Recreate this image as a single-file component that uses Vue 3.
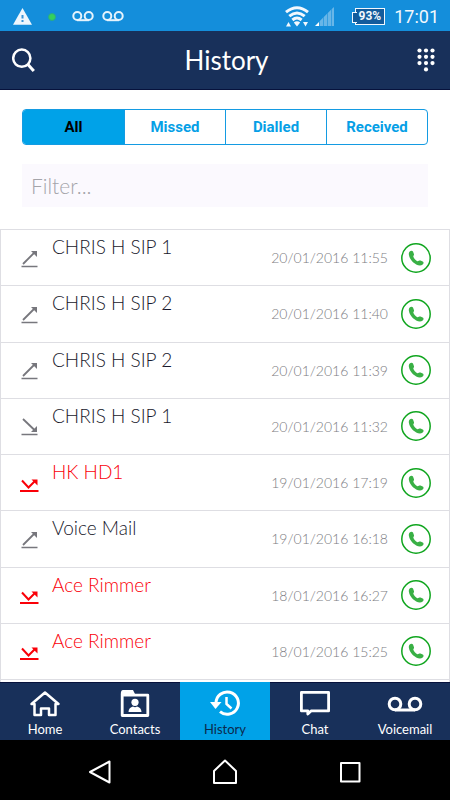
<script setup>
import { ref, computed } from 'vue'

const filters = ['All', 'Missed', 'Dialled', 'Received']
const active = ref('All')
const query = ref('')

const calls = [
  { name: 'CHRIS H SIP 1', time: '20/01/2016 11:55', type: 'Dialled' },
  { name: 'CHRIS H SIP 2', time: '20/01/2016 11:40', type: 'Dialled' },
  { name: 'CHRIS H SIP 2', time: '20/01/2016 11:39', type: 'Dialled' },
  { name: 'CHRIS H SIP 1', time: '20/01/2016 11:32', type: 'Received' },
  { name: 'HK HD1', time: '19/01/2016 17:19', type: 'Missed' },
  { name: 'Voice Mail', time: '19/01/2016 16:18', type: 'Dialled' },
  { name: 'Ace Rimmer', time: '18/01/2016 16:27', type: 'Missed' },
  { name: 'Ace Rimmer', time: '18/01/2016 15:25', type: 'Missed' },
]

const visible = computed(() =>
  calls.filter(
    (c) =>
      (active.value === 'All' || c.type === active.value) &&
      c.name.toLowerCase().includes(query.value.toLowerCase()),
  ),
)

const dots = [0, 1, 2].flatMap((r) => [0, 1, 2].map((c) => ({ x: 2.5 + c * 6.5, y: 2.5 + r * 6.3 })))
dots.push({ x: 9, y: 21.4 })
</script>

<template>
  <div class="app">
    <div class="status">
      <div class="status-side status-left">
        <svg width="20" height="18" viewBox="0 0 20 18">
          <path d="M10.500 0 20 16.700H1Z" fill="#eef6fd" />
          <path d="M10.500 7v3.500M10.500 12v2" stroke="#3a94d6" stroke-width="2" />
        </svg>
        <span class="dot"></span>
        <div class="tapes">
          <svg v-for="n in 2" :key="n" width="22" height="12" viewBox="0 0 22 12">
            <g fill="none" stroke="#e6f3fc" stroke-width="2">
              <circle cx="5.3" cy="5" r="4" /><circle cx="16.7" cy="5" r="4" /><path d="M5 9.2h12" />
            </g>
          </svg>
        </div>
      </div>
      <div class="status-side status-right">
        <svg width="26" height="22" viewBox="0 0 26 22">
          <g fill="none" stroke="#f2f8fd" stroke-width="3">
            <path d="M2 6.200Q13-2.800 24 6.200" />
            <path d="M5.300 10.200Q13 3.800 20.700 10.200" />
            <path d="M8.400 14Q13 10 17.600 14" />
          </g>
          <path d="M9.800 16.500Q13 14.100 16.200 16.500L13 20.500ZM2 20.500 4.500 16 7 20.500ZM19 16h5L21.500 20.500Z" fill="#f2f8fd" />
        </svg>
        <svg class="signal" width="20" height="20" viewBox="0 0 20 20">
          <path d="M0 19 4 15v4Z" fill="#fff" />
          <path d="M4.600 14.200 8 10.700V19H4.600ZM8.600 10.200 12 6.700V19H8.600ZM12.600 6.200 16 2.700V19h-3.400ZM16.600 2.200 19 0V19H16.600Z" fill="#68b6e8" />
        </svg>
        <span class="battery">93%</span>
        <span class="clock">17:01</span>
      </div>
    </div>

    <header class="header">
      <button class="icon-button" type="button" aria-label="Search">
        <svg width="24" height="24" viewBox="0 0 24 24" fill="none" stroke="#fff">
          <circle cx="9.800" cy="10.200" r="8.600" stroke-width="2.500" />
          <path d="m15.500 16 6.300 7" stroke-width="3" />
        </svg>
      </button>
      <h1>History</h1>
      <button class="icon-button" type="button" aria-label="Keypad">
        <svg width="18" height="24" viewBox="0 0 18 24">
          <circle v-for="(d, i) in dots" :key="i" :cx="d.x" :cy="d.y" r="2.100" fill="#fff" />
        </svg>
      </button>
    </header>

    <main class="content">
      <div class="tools">
        <div class="segments">
          <button
            v-for="f in filters"
            :key="f"
            type="button"
            :class="{ on: active === f }"
            :aria-pressed="active === f"
            @click="active = f"
          >{{ f }}</button>
        </div>
        <input v-model="query" class="filter" type="text" placeholder="Filter..." aria-label="Filter" />
      </div>

      <ul class="calls">
        <li v-for="(c, i) in visible" :key="i" :class="{ missed: c.type === 'Missed' }">
          <svg class="kind" width="20" height="20" viewBox="0 0 20 20" fill="none" stroke="currentColor">
            <g v-if="c.type === 'Dialled'">
              <path d="M4 16 15.500 4.500" stroke-width="1.800" />
              <path d="M12 3h6v6Z" fill="currentColor" stroke="none" />
              <path d="M2.500 18.500h16" stroke-width="1.500" />
            </g>
            <g v-else-if="c.type === 'Received'">
              <path d="M4 3 16 14.500" stroke-width="1.800" />
              <path d="M18 10v6h-6Z" fill="currentColor" stroke="none" />
              <path d="M2.500 18.500h16" stroke-width="1.500" />
            </g>
            <g v-else>
              <path d="m3 7.500 6.500 7 6.500-6.500" stroke-width="2" />
              <path d="M12.500 6.500h6v6Z" fill="currentColor" stroke="none" />
              <path d="M1 18h18.500" stroke-width="2" />
            </g>
          </svg>
          <span class="name">{{ c.name }}</span>
          <time>{{ c.time }}</time>
          <button class="call" type="button" :aria-label="'Call ' + c.name">
            <svg width="30" height="30" viewBox="0 0 30 30">
              <circle cx="15" cy="15" r="14.200" fill="none" stroke="#0fa51e" stroke-width="1.500" />
              <path d="M8.700 8.400C9.900 7.400 11.400 7.500 12 8.600L13 11.200C13.300 12.200 12.400 12.700 12.300 13.400C12.500 14.900 14.900 17.400 16.500 18.200C17.400 18.400 18.300 17.300 19.500 17.600L21.700 18.400C22.900 19 22.800 20.500 21.700 21.500C20 22.800 17.500 22.600 15.200 21.400C11.700 19.600 8.700 16 8 12.300C7.600 10.700 7.800 9.300 8.700 8.400Z" fill="#39b045" />
            </svg>
          </button>
        </li>
      </ul>
    </main>

    <nav class="tabs">
      <a href="#home">
        <svg width="32" height="28" viewBox="0 0 32 28" fill="none" stroke="#fff" stroke-width="2.500" stroke-linejoin="round">
          <path d="M2.500 14 16 2.500l13.500 11.500H26.500V25H20V18.500h-8V25H5.500V14Z" />
        </svg>
        <span>Home</span>
      </a>
      <a href="#contacts">
        <svg width="32" height="28" viewBox="0 0 32 28">
          <path d="M3.200 5.200H28.800v20.300H3.200Z" fill="none" stroke="#fff" stroke-width="2.800" stroke-linejoin="round" />
          <path d="M1.800 4Q1.800 0 4 0H14L16.500 5H1.800Z" fill="#fff" />
          <circle cx="16" cy="12.300" r="3.600" fill="#fff" />
          <path d="M9.500 22c0-3 2-5 4.500-5.500q2 1.500 4 0c2.500.500 4.500 2.500 4.500 5.500Z" fill="#fff" />
        </svg>
        <span>Contacts</span>
      </a>
      <a href="#history" class="current" aria-current="page">
        <svg width="32" height="28" viewBox="0 0 32 28" fill="none" stroke="#fff" stroke-width="3">
          <path d="M7 13A11.200 11.200 0 1 1 11 21.700" />
          <path d="M1 12h11.500L6.500 19Z" fill="#fff" stroke="none" />
          <path d="M17.500 7v7l5 4.500" stroke-width="2.500" />
        </svg>
        <span>History</span>
      </a>
      <a href="#chat">
        <svg width="32" height="28" viewBox="0 0 32 28" fill="none" stroke="#fff" stroke-width="2.800" stroke-linejoin="round">
          <path d="M2.400 2.400H29.600V20.900H12L8.800 24V20.900H2.400Z" />
        </svg>
        <span>Chat</span>
      </a>
      <a href="#voicemail">
        <svg width="36" height="28" viewBox="0 0 36 28" fill="none" stroke="#fff" stroke-width="3">
          <circle cx="8" cy="14" r="5.800" /><circle cx="28" cy="14" r="5.800" />
          <path d="M8 20h20" />
        </svg>
        <span>Voicemail</span>
      </a>
    </nav>

    <div class="system">
      <button type="button" aria-label="Back">
        <svg width="26" height="26" viewBox="0 0 26 26"><path d="M22.500 2.500v21L3 13Z" /></svg>
      </button>
      <button type="button" aria-label="Home screen">
        <svg width="26" height="26" viewBox="0 0 26 26"><path d="M13 1.500 24 12v12H2V12Z" /></svg>
      </button>
      <button type="button" aria-label="Recent apps">
        <svg width="26" height="26" viewBox="0 0 26 26"><path d="M4 4h18.500v18.500H4Z" /></svg>
      </button>
    </div>
  </div>
</template>

<style>
body {
  margin: 0;
  background: #fff;
}
</style>

<style scoped>
.app {
  display: flex;
  flex-direction: column;
  min-height: 100vh;
  font-family: Lato, sans-serif;
  color: #17172b;
}
.app * {
  box-sizing: border-box;
}
button {
  padding: 0;
  border: 0;
  background: none;
  font: inherit;
  color: inherit;
}
svg {
  display: block;
  flex: none;
}
.status {
  display: flex;
  justify-content: space-between;
  align-items: center;
  height: 31px;
  padding: 2px 11px 0 12px;
  background: #148edb;
  color: #f2f8fd;
  font-family: Roboto, sans-serif;
}
.status-side {
  display: flex;
  align-items: center;
}
.dot {
  width: 8px;
  height: 8px;
  margin: 0 16px;
  border-radius: 50%;
  background: #35d05c;
  border: 1px solid #28a98b;
}
.tapes {
  display: flex;
  gap: 8px;
}
.signal {
  margin: 0 20px 0 5px;
}
.battery {
  position: relative;
  padding: 0 3px;
  margin-right: 9px;
  border: 1px solid #f2f8fd;
  background: #135c9c;
  font-size: 12px;
  font-weight: 700;
  line-height: 15px;
}
.battery::before {
  content: '';
  position: absolute;
  top: 3px;
  left: -4px;
  width: 4px;
  height: 9px;
  border: 1px solid #f2f8fd;
  border-right: 0;
  background: #135c9c;
}
.clock {
  font-size: 18px;
}
.header {
  display: flex;
  justify-content: space-between;
  align-items: center;
  height: 59px;
  padding: 0 15px 0 12px;
  background: #18305a;
  border-bottom: 1px solid #07123c;
  color: #fff;
}
h1 {
  margin: 0;
  font-size: 26px;
  font-weight: 400;
}
.content {
  display: flex;
  flex: 1;
  flex-direction: column;
}
.tools {
  display: flex;
  flex-direction: column;
  gap: 19px;
  padding: 19px 22px 22px;
}
.segments {
  display: grid;
  grid-template-columns: repeat(4, 1fr);
  height: 36px;
  overflow: hidden;
  border: 1px solid #149be2;
  border-radius: 4px;
  font-family: Roboto, sans-serif;
  font-size: 15px;
  font-weight: 700;
  color: #069fe6;
}
.segments button + button {
  border-left: 1px solid #149be2;
}
.segments .on {
  background: #00a2e8;
  color: #000;
}
.filter {
  width: 100%;
  height: 43px;
  padding: 0 9px;
  border: 0;
  border-radius: 0;
  background: #fbf9fe;
  font: 300 21px Lato, sans-serif;
  color: #17172b;
}
.filter::placeholder {
  color: #a4a4aa;
  opacity: 1;
}
.calls {
  display: flex;
  flex: 1;
  flex-direction: column;
  margin: 0;
  padding: 0 0 2px;
  border: 1px solid #dedee3;
  border-bottom: 0;
  list-style: none;
}
.calls li {
  display: flex;
  flex: 1;
  align-items: center;
  padding: 0 18px;
  border-bottom: 1px solid #dedee3;
}
.kind {
  color: #77777d;
}
.missed .kind,
.missed .name {
  color: #fa0008;
}
.name {
  flex: 1;
  align-self: flex-start;
  padding: 5px 0 0 13px;
  font-size: 19px;
  font-weight: 300;
  line-height: 24px;
}
time {
  margin-right: 13px;
  font-size: 14px;
  font-weight: 300;
  color: #7c7c82;
}
.tabs {
  display: grid;
  grid-template-columns: repeat(5, 1fr);
  height: 58px;
  background: #18305a;
}
.tabs a {
  display: flex;
  flex-direction: column;
  align-items: center;
  gap: 2px;
  padding-top: 7px;
  border-top: 1px solid #07123c;
  color: #fff;
  font-size: 13px;
  line-height: 18px;
  text-decoration: none;
}
.tabs .current {
  background: #00a2e8;
  border-color: #00a2e8;
  color: #0c2a4c;
}
.system {
  display: flex;
  justify-content: center;
  align-items: center;
  gap: 99px;
  height: 60px;
  padding-top: 3px;
  background: #000;
}
.system svg {
  fill: none;
  stroke: #fff;
  stroke-width: 2;
  stroke-linejoin: round;
}
</style>
